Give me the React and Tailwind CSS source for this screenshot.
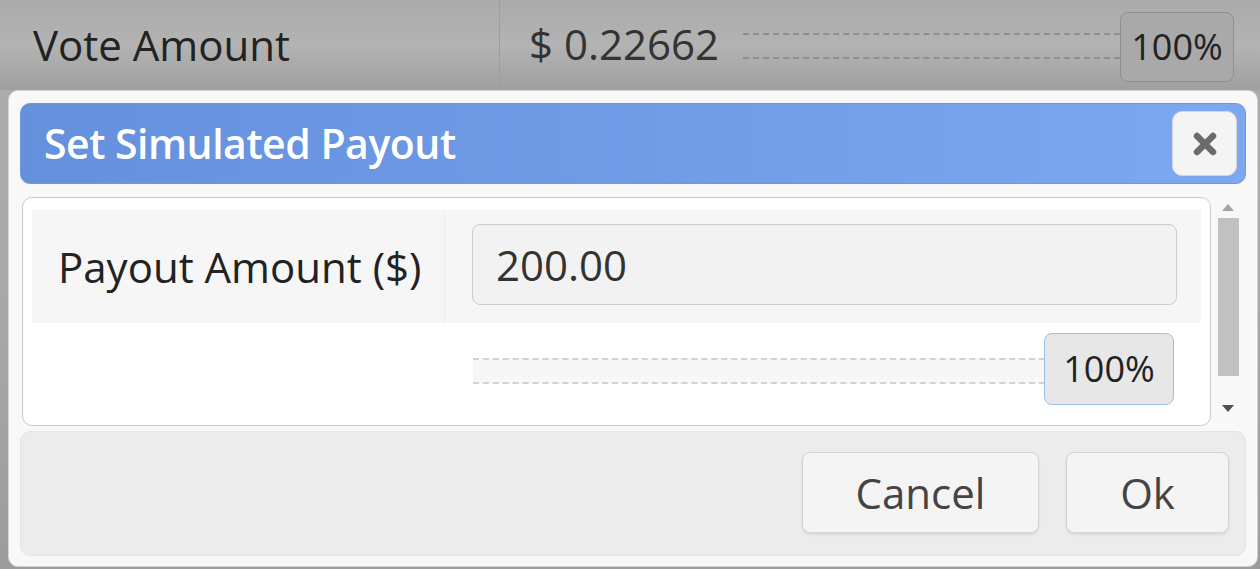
import React from 'react';

const font = { fontFamily: '"Open Sans", "Noto Sans", sans-serif' };

const CloseIcon = () => (
    <svg width="26" height="26" viewBox="0 0 26 26">
        <path d="M5 5 L21 21 M21 5 L5 21" stroke="#6b6b6b" strokeWidth="6.5" strokeLinecap="round" />
    </svg>
);

const Track = ({ className }) => (
    <div className={`border-y-2 border-dashed ${className}`} />
);

export default function App() {
    return (
        <div
            style={font}
            className="relative w-[1260px] h-[569px] overflow-hidden bg-gradient-to-b from-[#adadad] via-[#a9a9a9] to-[#9c9c9c]"
        >
            {/* page row behind the dialog */}
            <div className="flex h-[90px] pl-[8px] bg-gradient-to-b from-[#aaaaaa] via-[#b3b3b3] to-[#9f9f9f]">
                <div className="w-[492px] flex items-center pl-[25px] border-r border-[#9d9d9d] text-[42px] leading-none text-[#222]">
                    Vote Amount
                </div>
                <div className="flex-1 flex items-center pl-[29px] pr-[26px]">
                    <span className="text-[42px] leading-none text-[#333] w-[214px] pb-[2px]">$ 0.22662</span>
                    <Track className="flex-1 h-[26px] border-[#8e8e8e] mt-[2px]" />
                    <div className="w-[114px] h-[70px] mt-[4px] rounded-[8px] border border-[#8f8f8f] bg-[#a9a9a9] flex items-center justify-center text-[36px] leading-none text-[#222]">
                        100%
                    </div>
                </div>
            </div>

            {/* dialog */}
            <div className="absolute left-[8px] top-[90px] w-[1250px] h-[477px] bg-[#f8f8f8] border border-[#d4d4d4] rounded-[10px] px-[11px] pt-[12px] flex flex-col">
                <div className="h-[81px] rounded-[10px] bg-gradient-to-r from-[#6590dc] to-[#7ba8f1] border border-[#6d97e2] flex items-center justify-between pl-[23px] pr-[8px]">
                    <span className="text-[41px] leading-none font-semibold text-white tracking-[-0.5px]">Set Simulated Payout</span>
                    <button className="w-[65px] h-[65px] rounded-[10px] bg-[#f4f4f4] border border-[#d6d6d6] flex items-center justify-center">
                        <CloseIcon />
                    </button>
                </div>

                <div className="flex mt-[13px] h-[229px]">
                    <div className="ml-[2px] w-[1189px] h-full bg-white border border-[#c9c9c9] rounded-[10px] overflow-hidden px-[9px] pt-[12px]">
                        <div className="flex h-[113px] bg-[#f6f6f6]">
                            <div className="w-[413px] border-r border-[#ececec] flex items-center pl-[26px] text-[42px] leading-none text-[#222]">
                                Payout Amount ($)
                            </div>
                            <div className="flex-1 pl-[27px] pr-[24px] pt-[14px]">
                                <div className="h-[81px] bg-[#f2f2f2] border border-[#cccccc] rounded-[8px] flex items-center pl-[23px] text-[42px] leading-none text-[#333]">
                                    200.00
                                </div>
                            </div>
                        </div>
                        <div className="flex pl-[441px] pr-[27px] pt-[10px]">
                            <div className="flex-1 flex items-center">
                                <Track className="flex-1 h-[26px] mt-[4px] border-[#d2d2d2] bg-[#f7f7f7]" />
                                <div className="w-[130px] h-[72px] -ml-[1px] rounded-[8px] border border-[#9cc1e8] bg-[#e7e7e7] flex items-center justify-center text-[36px] leading-none text-[#222]">
                                    100%
                                </div>
                            </div>
                        </div>
                    </div>

                    {/* scrollbar */}
                    <div className="w-[34px] flex flex-col items-center pt-[7px] pb-[14px]">
                        <div className="w-0 h-0 border-x-[6px] border-x-transparent border-b-[7px] border-b-[#a3a3a3]" />
                        <div className="w-[21px] flex-1 mt-[7px] mb-[29px] bg-[#c1c1c1]" />
                        <div className="w-0 h-0 border-x-[6px] border-x-transparent border-t-[7px] border-t-[#505050]" />
                    </div>
                </div>

                <div className="mt-[5px] h-[125px] rounded-[10px] bg-[#ececec] border border-[#e4e4e4] flex items-center justify-end gap-[27px] pr-[16px] pb-[2px]">
                    <button className="w-[237px] h-[81px] rounded-[8px] bg-[#f4f4f4] border border-[#d2d2d2] shadow-[0_2px_3px_rgba(0,0,0,0.08)] text-[42px] leading-none text-[#444]">
                        Cancel
                    </button>
                    <button className="w-[163px] h-[81px] rounded-[8px] bg-[#f4f4f4] border border-[#d2d2d2] shadow-[0_2px_3px_rgba(0,0,0,0.08)] text-[42px] leading-none text-[#444]">
                        Ok
                    </button>
                </div>
            </div>
        </div>
    );
}
